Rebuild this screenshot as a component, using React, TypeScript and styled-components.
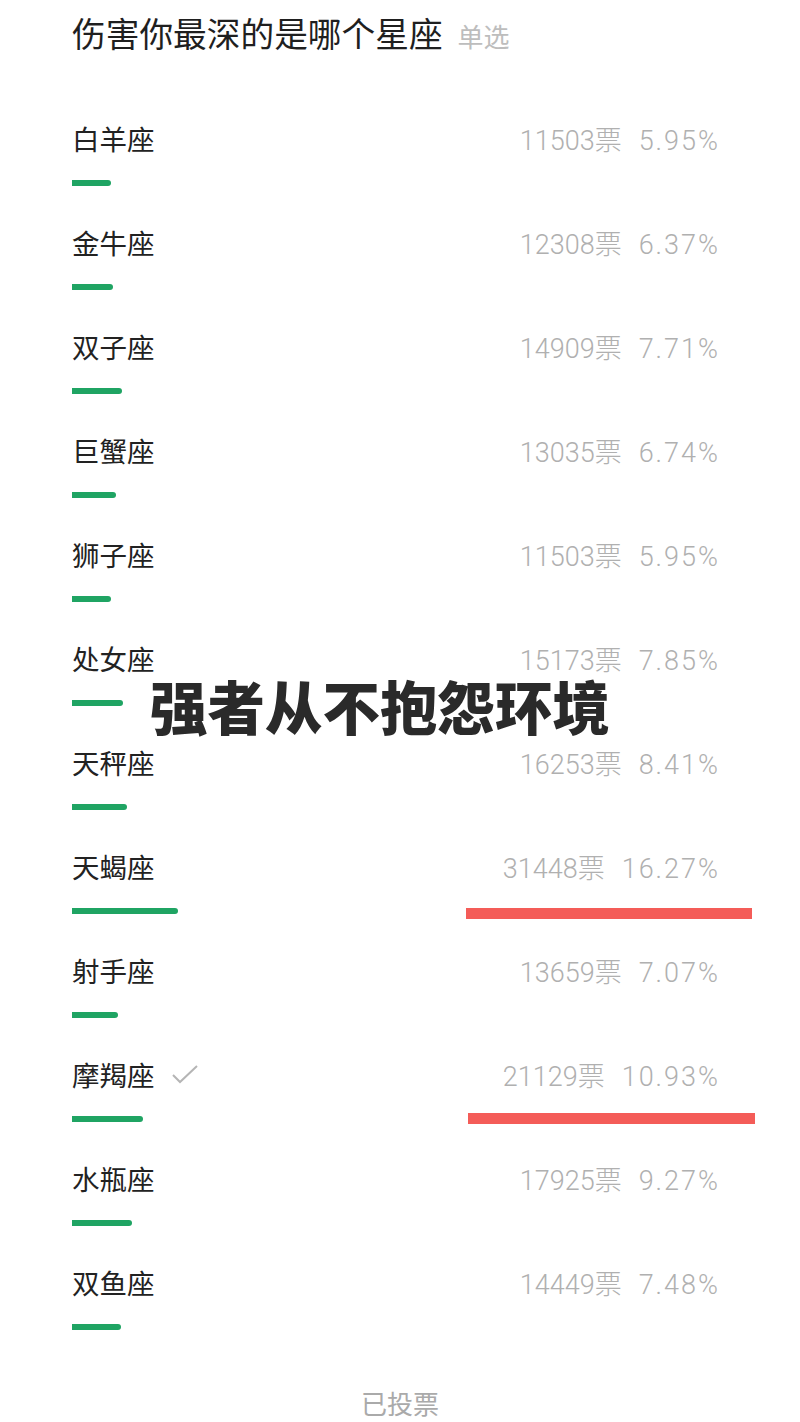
import React from "react";
import styled, { createGlobalStyle } from "styled-components";

const GlobalStyle = createGlobalStyle`
  html, body {
    margin: 0;
    padding: 0;
    background: #ffffff;
  }
  body {
    font-family: "Noto Sans CJK SC", "Noto Sans", sans-serif;
  }
`;

const Page = styled.div`
  position: relative;
  width: 800px;
  height: 1422px;
  box-sizing: border-box;
  padding: 11px 82px 0 72px;
  background: #fff;
  overflow: hidden;
`;

const TitleRow = styled.div`
  display: flex;
  align-items: baseline;
  height: 44px;
  line-height: 44px;
`;

const Title = styled.h1`
  margin: 0;
  font-size: 33.7px;
  font-weight: 400;
  color: #1f1f1f;
`;

const Mode = styled.span`
  margin-left: 15px;
  font-size: 26px;
  color: #bdbdbd;
`;

const List = styled.div`
  margin-top: 63px;
  display: flex;
  flex-direction: column;
`;

const Row = styled.div`
  height: 104px;
  display: flex;
  flex-direction: column;
`;

const LabelLine = styled.div`
  display: flex;
  align-items: center;
  height: 40px;
`;

const Name = styled.span`
  font-size: 27.5px;
  color: #222;
  line-height: 40px;
`;

const Check = styled.svg`
  margin-left: 16px;
  width: 28px;
  height: 22px;
`;

const Stats = styled.div`
  margin-left: auto;
  padding-top: 6px;
  display: flex;
  align-items: baseline;
  gap: 17px;
  line-height: 40px;
  font-family: "Roboto", "Noto Sans CJK SC", sans-serif;
  font-size: 27px;
  font-weight: 300;
  color: #b0b0b0;
`;

const Votes = styled.span``;

const Pct = styled.span`
  letter-spacing: 2px;
  margin-right: -2px;
`;

const Bar = styled.div<{ $pct: number }>`
  margin-top: 22px;
  height: 6px;
  width: ${(p) => p.$pct * 6.5}px;
  background: #1fa463;
  border-radius: 0 3px 3px 0;
`;

const Footer = styled.div`
  margin-top: 17px;
  text-align: center;
  margin-left: -72px;
  margin-right: -82px;
  font-size: 26px;
  line-height: 40px;
  color: #aaaaaa;
`;

const Caption = styled.div`
  position: absolute;
  left: 150px;
  top: 665px;
  font-size: 57.5px;
  font-weight: 900;
  line-height: 80px;
  color: #2a2a2a;
`;

const Mark = styled.div<{ $top: number; $left: number; $width: number }>`
  position: absolute;
  top: ${(p) => p.$top}px;
  left: ${(p) => p.$left}px;
  width: ${(p) => p.$width}px;
  height: 11px;
  background: #f45c58;
`;

const signs = [
  { name: "白羊座", votes: 11503, pct: 5.95 },
  { name: "金牛座", votes: 12308, pct: 6.37 },
  { name: "双子座", votes: 14909, pct: 7.71 },
  { name: "巨蟹座", votes: 13035, pct: 6.74 },
  { name: "狮子座", votes: 11503, pct: 5.95 },
  { name: "处女座", votes: 15173, pct: 7.85 },
  { name: "天秤座", votes: 16253, pct: 8.41 },
  { name: "天蝎座", votes: 31448, pct: 16.27 },
  { name: "射手座", votes: 13659, pct: 7.07 },
  { name: "摩羯座", votes: 21129, pct: 10.93, picked: true },
  { name: "水瓶座", votes: 17925, pct: 9.27 },
  { name: "双鱼座", votes: 14449, pct: 7.48 },
];

export default function App() {
  return (
    <>
      <GlobalStyle />
      <Page>
        <TitleRow>
          <Title>伤害你最深的是哪个星座</Title>
          <Mode>单选</Mode>
        </TitleRow>
        <List>
          {signs.map((s) => (
            <Row key={s.name}>
              <LabelLine>
                <Name>{s.name}</Name>
                {s.picked && (
                  <Check viewBox="0 0 28 22">
                    <path
                      d="M2 12 L9 19 L26 3"
                      fill="none"
                      stroke="#b5b5b5"
                      strokeWidth="2"
                    />
                  </Check>
                )}
                <Stats>
                  <Votes>{s.votes}票</Votes>
                  <Pct>{s.pct.toFixed(2)}%</Pct>
                </Stats>
              </LabelLine>
              <Bar $pct={s.pct} />
            </Row>
          ))}
        </List>
        <Footer>已投票</Footer>
        <Caption>强者从不抱怨环境</Caption>
        <Mark $top={908} $left={466} $width={286} />
        <Mark $top={1113} $left={468} $width={287} />
      </Page>
    </>
  );
}
